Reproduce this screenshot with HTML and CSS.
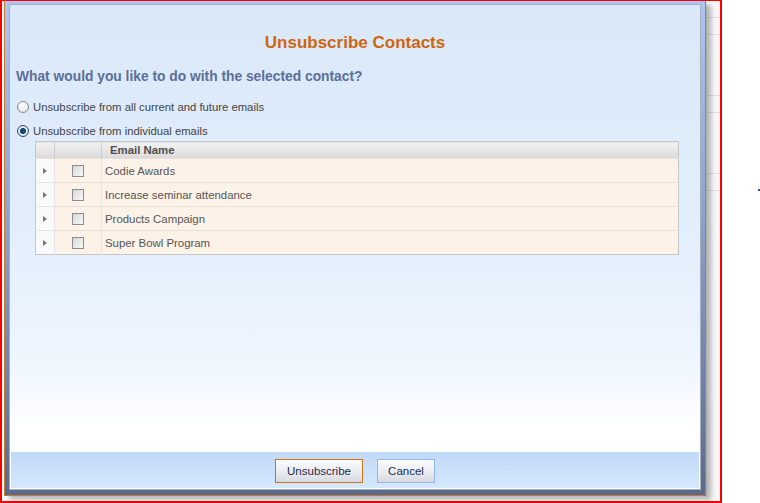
FILE: index.html
```html
<!DOCTYPE html>
<html lang="en">
  <head>
    <meta charset="UTF-8" />
    <title>Unsubscribe Contacts</title>
    <link rel="stylesheet" href="styles.css">
  </head>
  <body>
    <div class="screen">
      <div class="dialog">
        <div class="window">
          <div class="dialog-body">
            <h1 class="title">Unsubscribe Contacts</h1>
            <h2 class="question">What would you like to do with the selected contact?</h2>

            <label class="option">
              <span class="radio"></span>
              Unsubscribe from all current and future emails
            </label>
            <label class="option option-second">
              <span class="radio checked"></span>
              Unsubscribe from individual emails
            </label>

            <table class="grid">
              <thead>
                <tr>
                  <th class="col-expand"></th>
                  <th class="col-check"></th>
                  <th class="col-name">Email Name</th>
                </tr>
              </thead>
              <tbody>
                <tr>
                  <td class="col-expand"><span class="arrow"></span></td>
                  <td class="col-check"><span class="checkbox"></span></td>
                  <td class="col-name">Codie Awards</td>
                </tr>
                <tr>
                  <td class="col-expand"><span class="arrow"></span></td>
                  <td class="col-check"><span class="checkbox"></span></td>
                  <td class="col-name">Increase seminar attendance</td>
                </tr>
                <tr>
                  <td class="col-expand"><span class="arrow"></span></td>
                  <td class="col-check"><span class="checkbox"></span></td>
                  <td class="col-name">Products Campaign</td>
                </tr>
                <tr>
                  <td class="col-expand"><span class="arrow"></span></td>
                  <td class="col-check"><span class="checkbox"></span></td>
                  <td class="col-name">Super Bowl Program</td>
                </tr>
              </tbody>
            </table>
          </div>

          <div class="dialog-footer">
            <button class="btn btn-primary">Unsubscribe</button>
            <button class="btn btn-cancel">Cancel</button>
          </div>
        </div>
      </div>

      <div class="backdrop">
        <div class="backdrop-row"></div>
        <div class="backdrop-row"></div>
        <div class="backdrop-row tall"></div>
        <div class="backdrop-row"></div>
        <div class="backdrop-row tall"></div>
        <div class="backdrop-row"></div>
      </div>
    </div>
    <span class="stray-dot"></span>
  </body>
</html>
```

FILE: styles.css
```css
body {
  margin: 0;
  background: #fff;
  font-family: "Liberation Sans", Arial, sans-serif;
  color: #444;
  position: relative;
}

.screen {
  width: 718px;
  height: 500px;
  border: 2px solid #f00;
  border-top-width: 1px;
  display: flex;
  align-items: flex-start;
  background: #fff;
}

.dialog {
  width: 692px;
  height: 486px;
  margin-left: 2px;
  padding: 3px 4px 5px;
  border: 1px solid #c8782c;
  border-top: none;
  background: linear-gradient(#abc6f4, #8ea6d0 40%, #5a6a8c);
  box-shadow: 5px 4px 5px rgba(0, 0, 0, 0.28);
  position: relative;
  z-index: 1;
  flex-shrink: 0;
}

.window {
  height: 484px;
  border: 1px solid #a9aeb8;
  display: flex;
  flex-direction: column;
}

.dialog-body {
  flex: 1;
  padding: 28px 6px 0;
  background: linear-gradient(#d9e8f8, #e2eefb 50%, #eef6fe 80%, #f9fbff 90%, #fff 94%);
}

.title {
  margin: 0;
  font-size: 17px;
  line-height: 20px;
  font-weight: 700;
  text-align: center;
  color: #cf660e;
}

.question {
  margin: 15px 0 0;
  font-size: 13.8px;
  line-height: 18px;
  font-weight: 700;
  color: #5b6f98;
}

.option {
  display: flex;
  align-items: center;
  gap: 4px;
  margin: 13px 0 0 1px;
  height: 16px;
  font-size: 11.3px;
  color: #444;
}

.option-second {
  margin-top: 8px;
}

.radio {
  width: 10px;
  height: 10px;
  border: 1px solid #8a8a8a;
  border-radius: 50%;
  background: radial-gradient(circle at 40% 35%, #fff, #dcdcdc);
}

.radio.checked {
  border-color: #3a4a60;
  background: radial-gradient(circle, #1c5a8c 0, #0d3a66 2.5px, #e8eef4 3.5px, #cfd6de 5px);
}

.grid {
  margin: 2px 0 0 19px;
  width: 644px;
  border-collapse: collapse;
  border: 1px solid #c6c6c6;
  font-size: 11.4px;
}

.grid th {
  height: 16px;
  padding: 0;
  background: linear-gradient(#f2f2f2, #dadada);
  text-align: left;
  font-weight: 700;
  color: #4f4f4f;
  border-left: 1px solid #d0d0d0;
}

.grid td {
  height: 23px;
  padding: 0;
  background: #fdf2e8;
  border-top: 1px solid #e6e2da;
  border-left: 1px solid #e8e6e2;
  color: #555;
}

.grid .col-expand {
  width: 18px;
  border-left: none;
}

.grid td.col-expand {
  background: #fafafa;
  text-align: center;
}

.grid .col-check {
  width: 46px;
  text-align: center;
}

.grid th.col-name {
  padding-left: 8px;
}

.grid td.col-name {
  padding-left: 3px;
}

.arrow {
  display: inline-block;
  border-left: 4px solid #7a7a7a;
  border-top: 3px solid transparent;
  border-bottom: 3px solid transparent;
  vertical-align: middle;
}

.checkbox {
  display: inline-block;
  width: 10px;
  height: 10px;
  border: 1px solid #8c8c8c;
  background: linear-gradient(135deg, #d6d6d6, #fafafa);
  vertical-align: middle;
}

.dialog-footer {
  height: 36px;
  border: 1px solid #fff;
  background: linear-gradient(#c0d8f8, #d5e8fc);
  display: flex;
  justify-content: center;
  align-items: flex-start;
  gap: 14px;
}

.btn {
  margin-top: 7px;
  height: 24px;
  padding: 0;
  font-family: "Liberation Sans", Arial, sans-serif;
  font-size: 11.5px;
  color: #1b2a52;
  background: linear-gradient(#fbfbfc, #eceef2 50%, #d6d9e1);
  border: 1px solid #94b4f2;
}

.btn-primary {
  width: 88px;
  border-color: #cc7418;
}

.btn-cancel {
  width: 58px;
}

.backdrop {
  flex: 1;
  height: 500px;
  background: #f8f8f8;
  border-left: 1px solid #ececec;
}

.backdrop-row {
  height: 16px;
  border-bottom: 1px solid #e2e2e2;
}

.backdrop-row.tall {
  height: 60px;
}

.stray-dot {
  position: absolute;
  left: 758px;
  top: 189px;
  width: 2px;
  height: 2px;
  background: #3050c0;
}
```
